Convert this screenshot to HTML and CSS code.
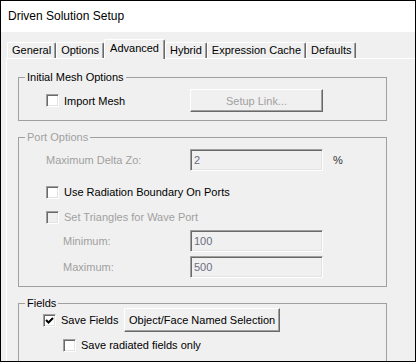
FILE: index.html
```html
<!DOCTYPE html>
<html lang="en">
<head>
  <meta charset="UTF-8" />
  <title>Driven Solution Setup</title>
  <link rel="stylesheet" href="styles.css">
</head>
<body>
  <div class="window">
    <div class="titlebar">Driven Solution Setup</div>

    <div class="tabstrip">
      <div class="tab">General</div>
      <div class="tab">Options</div>
      <div class="tab active">Advanced</div>
      <div class="tab">Hybrid</div>
      <div class="tab">Expression Cache</div>
      <div class="tab">Defaults</div>
    </div>

    <div class="panel">
      <fieldset class="group mesh-group">
        <legend>Initial Mesh Options</legend>
        <div class="content">
          <div class="row row-btn">
            <label class="check cell"><span class="box"></span>Import Mesh</label>
            <button class="btn" disabled>Setup Link...</button>
          </div>
        </div>
      </fieldset>

      <fieldset class="group port-group disabled">
        <legend>Port Options</legend>
        <div class="content">
          <div class="row row-input first">
            <span class="cell">Maximum Delta Zo:</span>
            <input class="field" type="text" value="2" disabled>
            <span class="unit">%</span>
          </div>
          <div class="row row-check radiation">
            <label class="check enabled"><span class="box"></span>Use Radiation Boundary On Ports</label>
          </div>
          <div class="row row-check triangles">
            <label class="check"><span class="box off"></span>Set Triangles for Wave Port</label>
          </div>
          <div class="row row-input min">
            <span class="cell sub">Minimum:</span>
            <input class="field" type="text" value="100" disabled>
          </div>
          <div class="row row-input max">
            <span class="cell sub">Maximum:</span>
            <input class="field" type="text" value="500" disabled>
          </div>
        </div>
      </fieldset>

      <fieldset class="group fields-group">
        <legend>Fields</legend>
        <div class="content">
          <div class="row row-save">
            <label class="check cell-save"><span class="box checked">
              <svg width="9" height="9" viewBox="0 0 9 9"><polyline points="1,4 3.5,6.5 8,2" fill="none" stroke="#000" stroke-width="2"/></svg>
            </span>Save Fields</label>
            <button class="btn named">Object/Face Named Selection</button>
          </div>
          <div class="row row-check radiated">
            <label class="check"><span class="box"></span>Save radiated fields only</label>
          </div>
        </div>
      </fieldset>
    </div>
  </div>
</body>
</html>
```

FILE: styles.css
```css
body {
  margin: 0;
  background: #fff;
  font-family: "Liberation Sans", Arial, sans-serif;
  font-size: 11px;
  color: #000;
}
.window {
  width: 416px;
  height: 362px;
  box-sizing: border-box;
  border: 1px solid #000;
  background: #f0f0f0;
  overflow: hidden;
  display: flex;
  flex-direction: column;
}
.titlebar {
  height: 31px;
  line-height: 31px;
  padding-left: 7px;
  background: #fff;
  font-size: 12px;
  flex-shrink: 0;
}

/* tabs */
.tabstrip {
  display: flex;
  align-items: flex-end;
  height: 19px;
  margin-top: 7px;
  padding-left: 6px;
  flex-shrink: 0;
}
.tab {
  height: 16px;
  line-height: 15px;
  box-sizing: border-box;
  padding: 0 4px;
  border-top: 1px solid #fff;
  border-left: 1px solid #fff;
  border-right: 1px solid #696969;
  box-shadow: inset -1px 0 0 #a0a0a0;
  border-radius: 2px 2px 0 0;
}
.tab.active {
  height: 20px;
  line-height: 16px;
  margin-bottom: -1px;
  padding: 0 5px;
  background: #f0f0f0;
  position: relative;
  z-index: 1;
}

.panel {
  flex: 1;
  border-top: 1px solid #fff;
  border-left: 1px solid #fff;
  margin-left: 5px;
  padding-left: 11px;
  display: flex;
  flex-direction: column;
}

/* group boxes */
.group {
  width: 369px;
  box-sizing: border-box;
  margin: 0;
  padding: 0 0 8px 6px;
  border: 1px solid #a0a0a0;
  min-width: 0;
}
.group legend {
  padding: 0 2px;
  line-height: 13px;
}
.content { padding-left: 21px; }
.mesh-group { margin-top: 12px; }
.port-group { margin-top: 10px; }
.fields-group { margin-top: 10px; }
.fields-group .content { padding-left: 18px; }
.disabled legend,
.disabled .cell,
.disabled .check { color: #a0a0a0; }
.disabled .check.enabled { color: #000; }

.row {
  display: flex;
  align-items: center;
}
.cell {
  width: 144px;
  flex-shrink: 0;
}
.cell.sub {
  width: 127px;
  padding-left: 17px;
}
.row-btn { margin-top: 5px; height: 23px; }
.row-input { height: 22px; }
.row-input.first { margin-top: 5px; }
.row-input.min { margin-top: 5px; }
.row-input.max { margin-top: 4px; }
.row-check { height: 16px; }
.radiation { margin-top: 13px; }
.triangles { margin-top: 9px; }

.row-save { margin-top: -2px; height: 24px; }
.cell-save { width: 81px; flex-shrink: 0; }
.radiated { margin-top: 5px; padding-left: 20px; }

/* checkbox */
.check {
  display: flex;
  align-items: center;
  gap: 5px;
}
.box {
  width: 13px;
  height: 13px;
  box-sizing: border-box;
  background: #fff;
  border-top: 1px solid #a0a0a0;
  border-left: 1px solid #a0a0a0;
  border-bottom: 1px solid #fff;
  border-right: 1px solid #fff;
  box-shadow: inset 1px 1px 0 #696969, inset -1px -1px 0 #e3e3e3;
  display: flex;
  align-items: center;
  justify-content: center;
  flex-shrink: 0;
}
.box.off { background: #f0f0f0; }

/* buttons */
.btn {
  width: 133px;
  height: 23px;
  font-family: inherit;
  font-size: 11px;
  background: #f0f0f0;
  color: #000;
  padding: 0;
  border-top: 1px solid #fff;
  border-left: 1px solid #fff;
  border-right: 1px solid #696969;
  border-bottom: 1px solid #696969;
  box-shadow: inset -1px -1px 0 #a0a0a0;
}
.btn:disabled { color: #a0a0a0; }
.btn.named {
  width: auto;
  height: 24px;
  padding: 0 4px;
}

/* inputs */
.field {
  width: 133px;
  height: 22px;
  box-sizing: border-box;
  margin: 0;
  padding: 0 3px;
  font-family: inherit;
  font-size: 11px;
  color: #6d6d80;
  background: #f0f0f0;
  border-top: 1px solid #a0a0a0;
  border-left: 1px solid #a0a0a0;
  border-bottom: 1px solid #fff;
  border-right: 1px solid #fff;
  box-shadow: inset 1px 1px 0 #696969, inset -1px -1px 0 #e3e3e3;
}
.unit {
  margin-left: 10px;
  color: #333;
}
```
